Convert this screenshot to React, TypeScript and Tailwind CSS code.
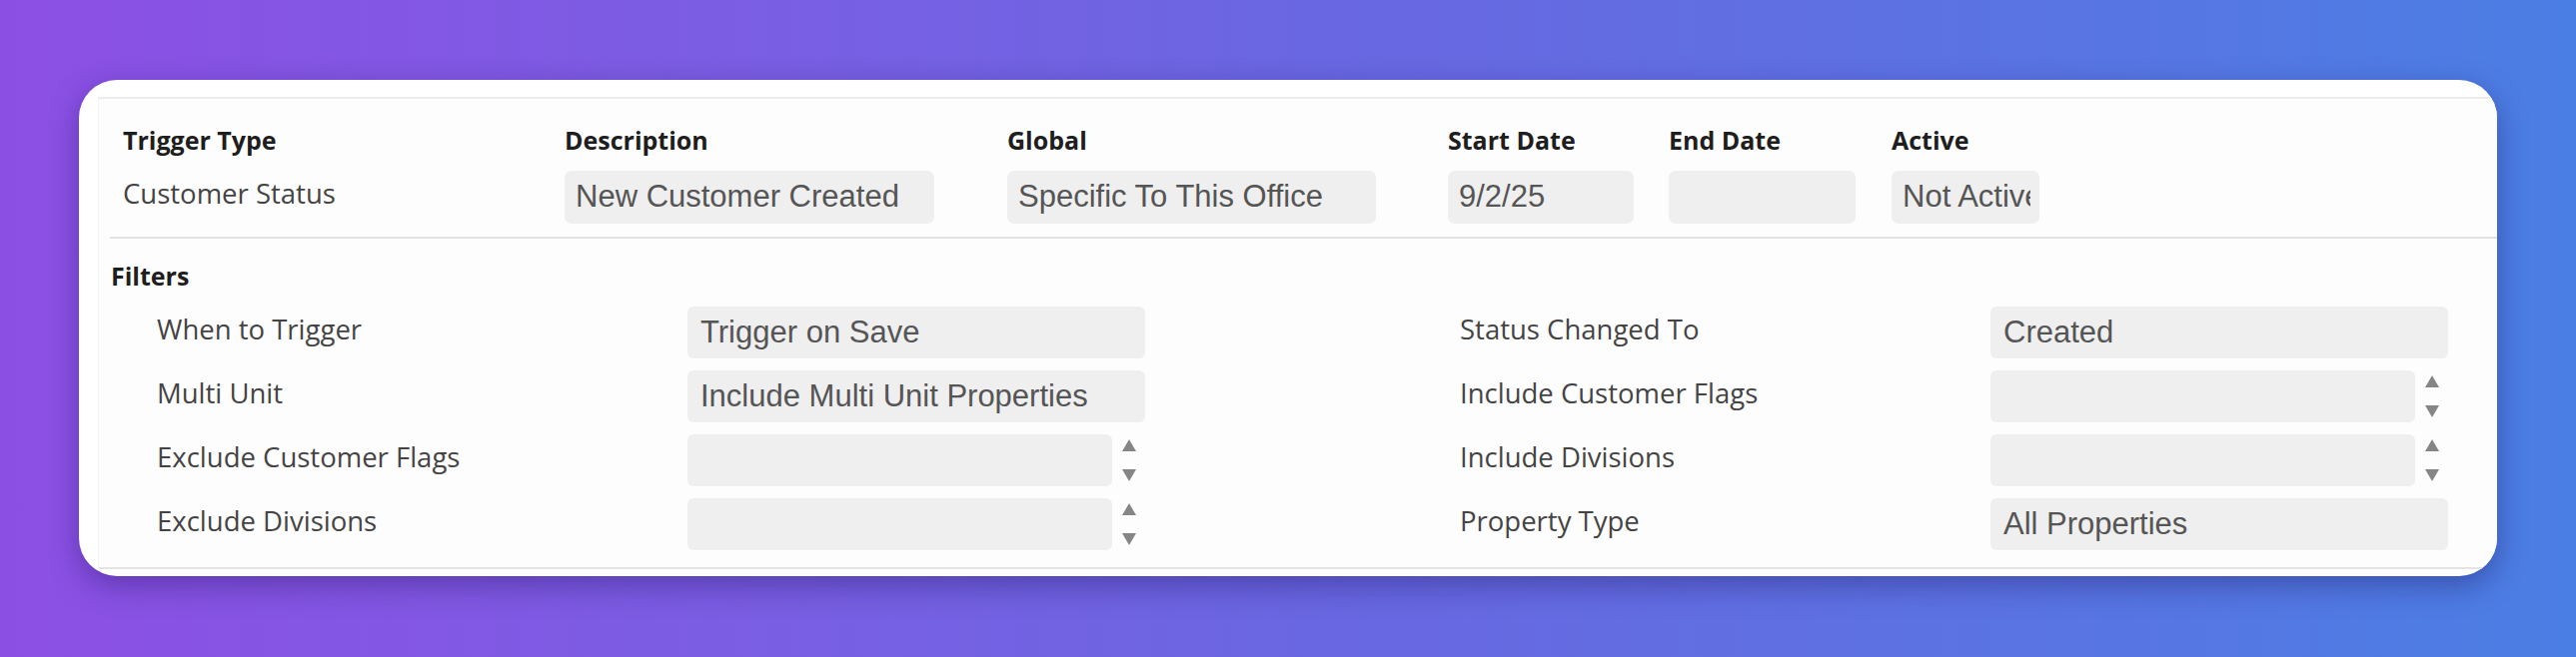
import React from 'react';

const label = "font-['Open_Sans',sans-serif]";
const field = "font-['Liberation_Sans',Arial,sans-serif]";

function Box({ value, w }: { value?: string; w: string }) {
  return (
    <div className={`${w} h-[53px] rounded-[7px] bg-[#efefef] pl-[11px] pr-[9px] flex items-center`}>
      <div className={`${field} overflow-hidden whitespace-nowrap text-[31px] text-[#555]`}>{value}</div>
    </div>
  );
}

function Arrows() {
  return (
    <div className="w-[34px] h-[52px] flex flex-col items-center justify-between py-[4px]">
      <svg width="16" height="14" viewBox="0 0 16 14">
        <path d="M8 1 L15 13 L1 13 Z" fill="#858585" />
      </svg>
      <svg width="16" height="14" viewBox="0 0 16 14">
        <path d="M1 1 L15 1 L8 13 Z" fill="#858585" />
      </svg>
    </div>
  );
}

function FilterRow({ name, value, spinner }: { name: string; value?: string; spinner?: boolean }) {
  return (
    <div className="flex items-center h-[52px]">
      <div className={`${label} w-[531px] text-[27.5px] text-[#444] -mt-[6px]`}>{name}</div>
      {spinner ? (
        <div className="flex">
          <div className="w-[425px] h-[52px] rounded-[6px] bg-[#efefef]" />
          <Arrows />
        </div>
      ) : (
        <div className="w-[458px] h-[52px] rounded-[6px] bg-[#efefef] pl-[13px] flex items-center">
          <span className={`${field} text-[31px] text-[#555] whitespace-nowrap`}>{value}</span>
        </div>
      )}
    </div>
  );
}

const header = [
  { h: 'Trigger Type', w: 'w-[442px]' },
  { h: 'Description', w: 'w-[443px]' },
  { h: 'Global', w: 'w-[441px]' },
  { h: 'Start Date', w: 'w-[221px]' },
  { h: 'End Date', w: 'w-[223px]' },
  { h: 'Active', w: 'w-[200px]' },
];

export default function App() {
  return (
    <div className="w-[2578px] h-[658px] bg-gradient-to-r from-[#8c4fe4] via-[#6a66e2] to-[#4a7ee3] pt-[80px] px-[79px]">
      <div className="h-[497px] rounded-[38px] bg-white overflow-hidden pt-[17px] pl-[19px] shadow-[0_10px_30px_rgba(20,10,80,0.35)]">
        <div className="h-[473px] border-t-2 border-b-2 border-l border-t-[#ececec] border-b-[#e4e4e4] border-l-[#f3f3f3] bg-[#fdfdfd]">
          {/* top block */}
          <div className="pl-[24px] pt-[24px]">
            <div className="flex">
              {header.map((c) => (
                <div key={c.h} className={`${c.w} ${label} text-[25px] font-bold text-[#1e1e1e] leading-[34px]`}>
                  {c.h}
                </div>
              ))}
            </div>
            <div className="flex mt-[14px] h-[53px]">
              <div className={`w-[442px] ${label} text-[27.5px] text-[#444] pt-[2px]`}>Customer Status</div>
              <div className="w-[443px]">
                <Box w="w-[370px]" value="New Customer Created" />
              </div>
              <div className="w-[441px]">
                <Box w="w-[369px]" value="Specific To This Office" />
              </div>
              <div className="w-[221px]">
                <Box w="w-[186px]" value="9/2/25" />
              </div>
              <div className="w-[223px]">
                <Box w="w-[187px]" />
              </div>
              <div>
                <Box w="w-[148px]" value="Not Active" />
              </div>
            </div>
          </div>
          <div className="ml-[11px] mt-[13px] border-t-2 border-[#e2e2e2]" />

          {/* filters */}
          <div className="pl-[12px] pt-[20px]">
            <div className={`${label} text-[25px] font-bold text-[#1e1e1e] leading-[34px]`}>Filters</div>
            <div className="ml-[46px] mt-[14px] grid grid-cols-[990px_990px] gap-x-[314px] gap-y-[12px]">
              <FilterRow name="When to Trigger" value="Trigger on Save" />
              <FilterRow name="Status Changed To" value="Created" />
              <FilterRow name="Multi Unit" value="Include Multi Unit Properties" />
              <FilterRow name="Include Customer Flags" spinner />
              <FilterRow name="Exclude Customer Flags" spinner />
              <FilterRow name="Include Divisions" spinner />
              <FilterRow name="Exclude Divisions" spinner />
              <FilterRow name="Property Type" value="All Properties" />
            </div>
          </div>
        </div>
      </div>
    </div>
  );
}
